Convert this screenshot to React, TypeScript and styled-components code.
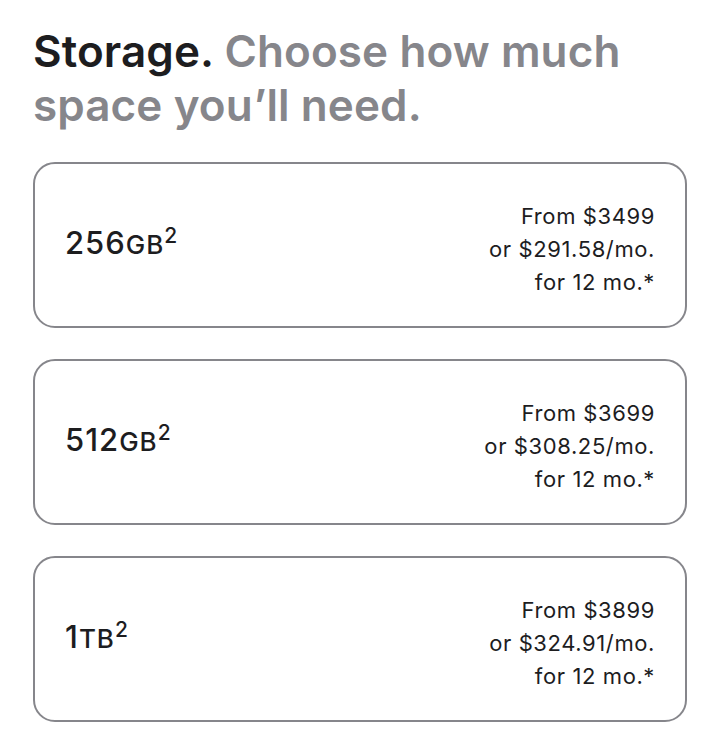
import React from 'react'
import styled, { createGlobalStyle } from 'styled-components'

const GlobalStyle = createGlobalStyle`
  body {
    margin: 0;
    background: #ffffff;
    font-family: Inter, "Noto Sans", "Liberation Sans", sans-serif;
    -webkit-font-smoothing: antialiased;
  }
`

const options = [
  { size: '256', unit: 'GB', price: '$3499', monthly: '$291.58' },
  { size: '512', unit: 'GB', price: '$3699', monthly: '$308.25' },
  { size: '1', unit: 'TB', price: '$3899', monthly: '$324.91' },
]

const App: React.FC = () => {
  return (
    <StyledPage>
      <GlobalStyle />
      <StyledHeading>
        <Strong>Storage.</Strong> Choose how much space you’ll need.
      </StyledHeading>
      <StyledList>
        {options.map((o) => (
          <StyledCard key={o.size + o.unit}>
            <Capacity>
              {o.size}
              <Unit>{o.unit}</Unit>
              <Footnote>2</Footnote>
            </Capacity>
            <Price>
              <div>From {o.price}</div>
              <div>or {o.monthly}/mo.</div>
              <div>for 12 mo.*</div>
            </Price>
          </StyledCard>
        ))}
      </StyledList>
    </StyledPage>
  )
}

const StyledPage = styled.div`
  padding: 24px 19px 16px 33px;
`

const StyledHeading = styled.h2`
  margin: 0 0 30px;
  width: 640px;
  font-size: 44px;
  line-height: 54px;
  font-weight: 600;
  letter-spacing: 0.1px;
  color: #86868b;
`

const Strong = styled.span`
  color: #1d1d1f;
`

const StyledList = styled.div`
  display: flex;
  flex-direction: column;
  gap: 31px;
`

const StyledCard = styled.div`
  box-sizing: border-box;
  height: 166px;
  border: 2px solid #86868b;
  border-radius: 22px;
  padding: 0 30px 0 30px;
  display: flex;
  align-items: center;
  justify-content: space-between;
  color: #1d1d1f;
`

const Capacity = styled.div`
  font-size: 31px;
  font-weight: 500;
  letter-spacing: 1px;
  margin-top: -6px;
`

const Unit = styled.span`
  font-size: 26px;
`

const Footnote = styled.sup`
  font-size: 21px;
  line-height: 0;
`

const Price = styled.div`
  text-align: right;
  font-size: 22px;
  line-height: 33px;
  font-weight: 400;
  letter-spacing: 0.6px;
  margin-top: 8px;
`

export default App
